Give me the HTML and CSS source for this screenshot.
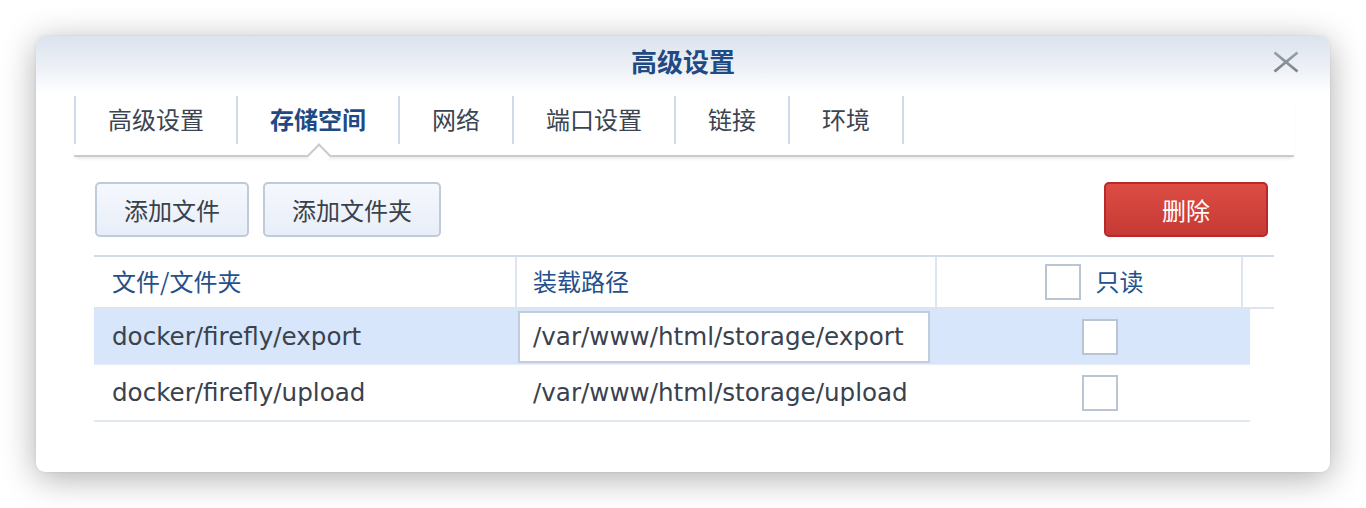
FILE: index.html
```html
<!DOCTYPE html>
<html lang="zh-CN">
<head>
<meta charset="utf-8">
<title>高级设置</title>
<link rel="stylesheet" href="styles.css">
</head>
<body>
<div class="stage">
  <div class="dialog">
    <div class="titlebar">
      <span></span>
      <span class="title">高级设置</span>
      <span class="close-wrap">
        <svg class="close" width="26" height="22" viewBox="0 0 26 22">
          <defs>
            <linearGradient id="xg" x1="0" y1="0" x2="0" y2="1">
              <stop offset="0" stop-color="#9aa0a8"/>
              <stop offset="1" stop-color="#7d838b"/>
            </linearGradient>
          </defs>
          <path d="M1.5 1.5 L24.5 20.5 M24.5 1.5 L1.5 20.5" stroke="url(#xg)" stroke-width="2.8" stroke-linecap="butt" fill="none"/>
        </svg>
      </span>
    </div>
    <div class="content">
      <div class="tabs">
        <div class="tab">高级设置</div>
        <div class="tab active">存储空间</div>
        <div class="tab">网络</div>
        <div class="tab">端口设置</div>
        <div class="tab">链接</div>
        <div class="tab last">环境</div>
      </div>
      <div class="toolbar">
        <div class="btn-group">
          <button class="btn">添加文件</button>
          <button class="btn">添加文件夹</button>
        </div>
        <button class="btn danger">删除</button>
      </div>
      <div class="grid">
        <div class="ghead">
          <div class="hc c1">文件/文件夹</div>
          <div class="hc c2">装载路径</div>
          <div class="hc c3"><span class="cb"></span><span>只读</span></div>
          <div class="hc c4"></div>
        </div>
        <div class="row sel">
          <div class="bc c1">docker/firefly/export</div>
          <div class="bc c2"><div class="edit">/var/www/html/storage/export</div></div>
          <div class="bc b3"><span class="cb"></span></div>
        </div>
        <div class="row">
          <div class="bc c1">docker/firefly/upload</div>
          <div class="bc c2"><span class="ptext">/var/www/html/storage/upload</span></div>
          <div class="bc b3"><span class="cb"></span></div>
        </div>
      </div>
    </div>
  </div>
</div>
</body>
</html>
```

FILE: styles.css
```css
html, body {
  margin: 0;
  padding: 0;
  background: #ffffff;
}

body {
  font-family: "DejaVu Sans", "Noto Sans CJK SC", sans-serif;
  color: #3a434e;
}

.stage {
  padding: 36px 36px 36px 36px;
  width: 1294px;
}

.dialog {
  width: 1294px;
  height: 436px;
  background: #ffffff;
  border-radius: 9px;
  box-shadow: 0 6px 34px rgba(0, 0, 0, 0.32), 0 0 3px rgba(0, 0, 0, 0.08);
  overflow: hidden;
}

.titlebar {
  height: 60px;
  display: grid;
  grid-template-columns: 1fr auto 1fr;
  align-items: start;
  background: linear-gradient(#dce3ed 0px, #eef2f7 34px, #ffffff 58px);
}

.title {
  font-family: "Noto Sans CJK SC", sans-serif;
  font-weight: 700;
  font-size: 26px;
  line-height: 30px;
  padding-top: 10px;
  color: #1f4a84;
}

.close-wrap {
  justify-self: end;
  padding: 15px 31px 0 0;
}

.close {
  display: block;
}

.content {
  padding: 0 36px 0 38px;
}

.tabs {
  display: flex;
  height: 48px;
  padding-bottom: 11px;
  border-bottom: 2px solid #cbcbcb;
  box-shadow: 0 3px 4px -2px rgba(0, 0, 0, 0.12);
  font-family: "Noto Sans CJK SC", sans-serif;
}

.tab {
  position: relative;
  height: 48px;
  line-height: 45px;
  padding: 0 32px 0 32px;
  border-left: 2px solid #cfdbe8;
  font-size: 24px;
  color: #3b4450;
}

.tab.last {
  border-right: 2px solid #cfdbe8;
}

.tab.active {
  color: #1f4a84;
  font-weight: 700;
}

.tab.active::after {
  content: "";
  position: absolute;
  left: 50%;
  bottom: -21px;
  width: 16px;
  height: 16px;
  margin-left: -8px;
  background: #ffffff;
  border-top: 2px solid #cbcbcb;
  border-left: 2px solid #cbcbcb;
  transform: rotate(45deg);
}

.toolbar {
  display: flex;
  justify-content: space-between;
  margin-top: 25px;
  padding: 0 26px 0 21px;
}

.btn-group {
  display: flex;
  gap: 14px;
}

.btn {
  height: 55px;
  padding: 0 27px;
  border: 2px solid #c0cbda;
  border-radius: 5px;
  background: linear-gradient(#f5f8fd, #e8eef8);
  font-family: "Noto Sans CJK SC", sans-serif;
  font-size: 24px;
  color: #39414b;
}

.btn.danger {
  width: 164px;
  border-color: #b9292b;
  background: linear-gradient(#dc4c44, #c63a35);
  color: #ffffff;
}

.grid {
  margin: 18px 20px 0 20px;
}

.ghead {
  display: flex;
  height: 50px;
  border-top: 2px solid #d3dde9;
  border-bottom: 2px solid #dbe5f0;
  color: #24508b;
  font-size: 24px;
}

.hc {
  display: flex;
  align-items: center;
  box-sizing: border-box;
  padding-bottom: 3px;
}

.c1 {
  width: 421px;
  padding-left: 18px;
  box-sizing: border-box;
}

.c2 {
  width: 420px;
  box-sizing: border-box;
}

.hc.c2 {
  border-left: 2px solid #dde6f0;
  padding-left: 16px;
  font-family: "Noto Sans CJK SC", sans-serif;
}

.hc.c1 {
  font-family: "Noto Sans CJK SC", sans-serif;
}

.hc.c3 {
  width: 306px;
  border-left: 2px solid #dde6f0;
  justify-content: center;
  gap: 15px;
  padding-left: 10px;
  padding-bottom: 0;
  font-family: "Noto Sans CJK SC", sans-serif;
}

.hc.c3 span:last-child {
  padding-bottom: 3px;
}

.hc.c4 {
  width: 33px;
  border-left: 2px solid #dde6f0;
}

.cb {
  display: inline-block;
  width: 32px;
  height: 32px;
  border: 2px solid #bac5d3;
  background: #ffffff;
}

.row {
  display: flex;
  width: 1156px;
  height: 55px;
  border-bottom: 1px solid #e8eef5;
  font-size: 24.6px;
  color: #39424d;
}

.row:last-child {
  border-bottom: 2px solid #e2e8f0;
}

.row.sel {
  background: #d7e6fa;
}

.bc {
  display: flex;
  align-items: center;
  box-sizing: border-box;
}

.bc.c2 {
  padding: 0 5px 0 3px;
}

.edit {
  box-sizing: border-box;
  width: 100%;
  height: 52px;
  line-height: 48px;
  padding-left: 13px;
  border: 2px solid #c2cddb;
  background: #ffffff;
  white-space: nowrap;
}

.ptext {
  padding-left: 15px;
  white-space: nowrap;
}

.bc.b3 {
  width: 315px;
  justify-content: center;
  padding-left: 14px;
}
```
